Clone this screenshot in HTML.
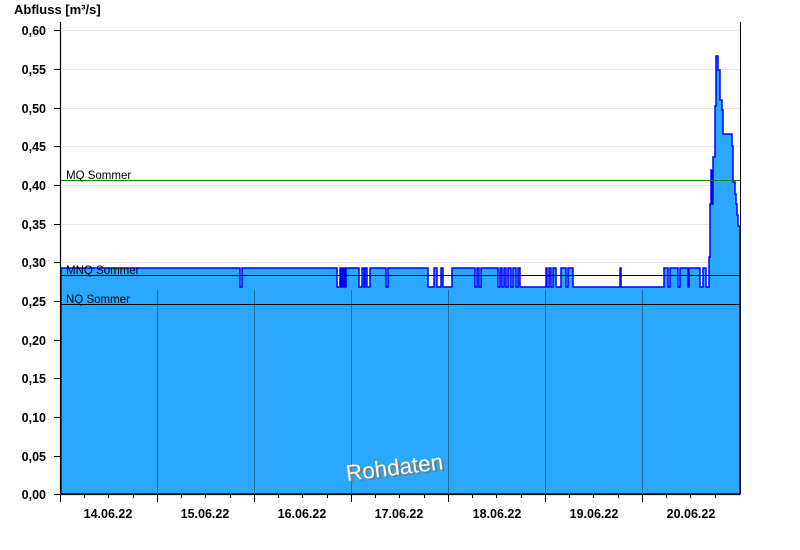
<!DOCTYPE html>
<html><head><meta charset="utf-8"><style>
html,body{margin:0;padding:0;background:#fff;}
svg{display:block;font-family:"Liberation Sans",Arial,sans-serif;}
</style></head><body>
<svg width="800" height="550" viewBox="0 0 800 550" xmlns="http://www.w3.org/2000/svg">
<rect width="800" height="550" fill="#fff"/>
<g stroke="#e8e8e8" stroke-width="1">
<line x1="61" y1="30.5" x2="740" y2="30.5"/>
<line x1="61" y1="69.5" x2="740" y2="69.5"/>
<line x1="61" y1="108.5" x2="740" y2="108.5"/>
<line x1="61" y1="146.5" x2="740" y2="146.5"/>
<line x1="61" y1="185.5" x2="740" y2="185.5"/>
<line x1="61" y1="224.5" x2="740" y2="224.5"/>
<line x1="61" y1="262.5" x2="740" y2="262.5"/>
</g>
<path fill="#2aa8fe" stroke="#0000ff" stroke-width="1.5" d="M61,494 L61,268 L240,268 L240,287 L242,287 L242,268 L337,268 L337,287 L340,287 L340,268 L341,268 L341,287 L342,287 L342,268 L343,268 L343,287 L344,287 L344,268 L345,268 L345,287 L346,287 L346,268 L359,268 L359,287 L362,287 L362,268 L364,268 L364,287 L365,287 L365,268 L367,268 L367,287 L370,287 L370,268 L386,268 L386,287 L388,287 L388,268 L428,268 L428,287 L434,287 L434,268 L437,268 L437,287 L441,287 L441,268 L443,268 L443,287 L452,287 L452,268 L475,268 L475,287 L477,287 L477,268 L479,268 L479,287 L481,287 L481,268 L498,268 L498,287 L500,287 L500,268 L502,268 L502,287 L504,287 L504,268 L506,268 L506,287 L508,287 L508,268 L511,268 L511,287 L513,287 L513,268 L516,268 L516,287 L518,287 L518,268 L520,268 L520,287 L546,287 L546,268 L547,268 L547,287 L549,287 L549,268 L551,268 L551,287 L553,287 L553,268 L556,268 L556,287 L561,287 L561,268 L566,268 L566,287 L568,287 L568,268 L573,268 L573,287 L620,287 L620,268 L621,268 L621,287 L664,287 L664,268 L668,268 L668,287 L670,287 L670,268 L678,268 L678,287 L680,287 L680,268 L688,268 L688,287 L689,287 L689,268 L700,268 L700,287 L703,287 L703,268 L706,268 L706,287 L709,287 L709,257 L710,257 L710,204 L711,204 L711,170 L712,170 L712,204 L713,204 L713,157 L715,157 L715,106 L716,106 L716,56 L718,56 L718,70 L720,70 L720,100 L722,100 L722,110 L723,110 L723,134 L732,134 L732,146 L733,146 L733,182 L735,182 L735,194 L736,194 L736,204 L737,204 L737,215 L738,215 L738,226 L740,226 L740,494 Z"/>
<g stroke="#1e6a9a" stroke-width="1">
<line x1="157.5" y1="290" x2="157.5" y2="494"/>
<line x1="254.5" y1="290" x2="254.5" y2="494"/>
<line x1="351.5" y1="290" x2="351.5" y2="494"/>
<line x1="448.5" y1="290" x2="448.5" y2="494"/>
<line x1="545.5" y1="290" x2="545.5" y2="494"/>
<line x1="642.5" y1="290" x2="642.5" y2="494"/>
</g>
<line x1="61" y1="180.5" x2="740" y2="180.5" stroke="#008000" stroke-width="1"/>
<line x1="61" y1="275.5" x2="740" y2="275.5" stroke="#000" stroke-width="1"/>
<line x1="61" y1="304.5" x2="740" y2="304.5" stroke="#000" stroke-width="1"/>
<g font-size="11.5" fill="#000">
<text x="66" y="179">MQ Sommer</text>
<text x="66" y="274">MNQ Sommer</text>
<text x="66" y="303">NQ Sommer</text>
</g>
<line x1="740.5" y1="22" x2="740.5" y2="494" stroke="#000"/>
<line x1="60.5" y1="22" x2="60.5" y2="495" stroke="#000" stroke-width="1.2"/>
<line x1="60" y1="494.5" x2="740" y2="494.5" stroke="#000" stroke-width="1.2"/>
<g stroke="#000" stroke-width="1">
<line x1="54" y1="30.5" x2="60" y2="30.5"/><line x1="54" y1="69.5" x2="60" y2="69.5"/><line x1="54" y1="108.5" x2="60" y2="108.5"/><line x1="54" y1="146.5" x2="60" y2="146.5"/><line x1="54" y1="185.5" x2="60" y2="185.5"/><line x1="54" y1="224.5" x2="60" y2="224.5"/><line x1="54" y1="262.5" x2="60" y2="262.5"/><line x1="54" y1="301.5" x2="60" y2="301.5"/><line x1="54" y1="340.5" x2="60" y2="340.5"/><line x1="54" y1="378.5" x2="60" y2="378.5"/><line x1="54" y1="417.5" x2="60" y2="417.5"/><line x1="54" y1="456.5" x2="60" y2="456.5"/><line x1="54" y1="494.5" x2="60" y2="494.5"/>
<line x1="60.5" y1="494" x2="60.5" y2="502"/>
<line x1="157.5" y1="494" x2="157.5" y2="502"/><line x1="254.5" y1="494" x2="254.5" y2="502"/><line x1="351.5" y1="494" x2="351.5" y2="502"/><line x1="448.5" y1="494" x2="448.5" y2="502"/><line x1="545.5" y1="494" x2="545.5" y2="502"/><line x1="642.5" y1="494" x2="642.5" y2="502"/>
<line x1="84.5" y1="494" x2="84.5" y2="498"/><line x1="108.5" y1="494" x2="108.5" y2="498"/><line x1="133.5" y1="494" x2="133.5" y2="498"/>
<line x1="181.5" y1="494" x2="181.5" y2="498"/><line x1="205.5" y1="494" x2="205.5" y2="498"/><line x1="230.5" y1="494" x2="230.5" y2="498"/>
<line x1="278.5" y1="494" x2="278.5" y2="498"/><line x1="302.5" y1="494" x2="302.5" y2="498"/><line x1="327.5" y1="494" x2="327.5" y2="498"/>
<line x1="375.5" y1="494" x2="375.5" y2="498"/><line x1="399.5" y1="494" x2="399.5" y2="498"/><line x1="424.5" y1="494" x2="424.5" y2="498"/>
<line x1="472.5" y1="494" x2="472.5" y2="498"/><line x1="496.5" y1="494" x2="496.5" y2="498"/><line x1="521.5" y1="494" x2="521.5" y2="498"/>
<line x1="569.5" y1="494" x2="569.5" y2="498"/><line x1="593.5" y1="494" x2="593.5" y2="498"/><line x1="618.5" y1="494" x2="618.5" y2="498"/>
<line x1="666.5" y1="494" x2="666.5" y2="498"/><line x1="690.5" y1="494" x2="690.5" y2="498"/><line x1="715.5" y1="494" x2="715.5" y2="498"/>
</g>
<g font-size="12.5" font-weight="bold" fill="#000" text-anchor="end">
<text x="46" y="35">0,60</text><text x="46" y="74">0,55</text><text x="46" y="113">0,50</text><text x="46" y="151">0,45</text><text x="46" y="190">0,40</text><text x="46" y="229">0,35</text><text x="46" y="267">0,30</text><text x="46" y="306">0,25</text><text x="46" y="345">0,20</text><text x="46" y="383">0,15</text><text x="46" y="422">0,10</text><text x="46" y="461">0,05</text><text x="46" y="499">0,00</text>
</g>
<g font-size="12.5" font-weight="bold" fill="#000" text-anchor="middle">
<text x="108" y="518">14.06.22</text><text x="205" y="518">15.06.22</text><text x="302" y="518">16.06.22</text><text x="399" y="518">17.06.22</text><text x="497" y="518">18.06.22</text><text x="594" y="518">19.06.22</text><text x="691" y="518">20.06.22</text>
</g>
<text x="14" y="14" font-size="13" font-weight="bold" fill="#000">Abfluss [m³/s]</text>
<g transform="translate(347,481) rotate(-7)" font-size="22.5">
<text x="2" y="2" fill="#7a7a7a">Rohdaten</text>
<text x="0" y="0" fill="#fff">Rohdaten</text>
</g>
</svg>
</body></html>
